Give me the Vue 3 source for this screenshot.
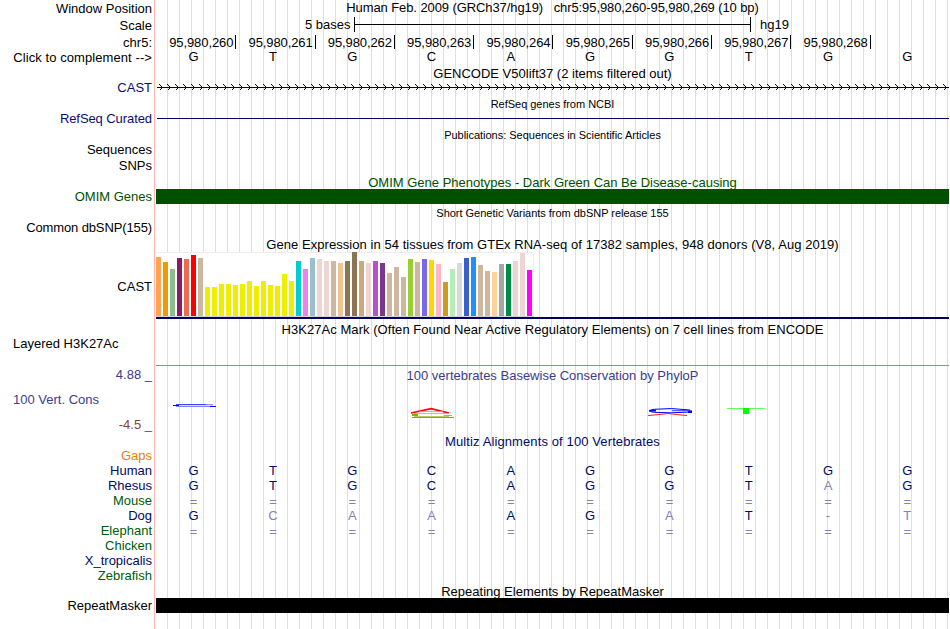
<script setup>
const coords = Array.from({ length: 9 }, (_, i) => `95,980,26${i}`)
const bases = "GTGCAGGTGG".split("")

// GTEx V8: [color, bar height in px]
const tissues = [
    ["#ffa54f", 59],
    ["#ee9a00", 54],
    ["#8fbc8f", 47],
    ["#8b1c62", 58],
    ["#ee6a50", 57],
    ["#ff0000", 61],
    ["#cdb79e", 58],
    ["#eeee00", 29],
    ["#eeee00", 29],
    ["#eeee00", 32],
    ["#eeee00", 32],
    ["#eeee00", 31],
    ["#eeee00", 32],
    ["#eeee00", 35],
    ["#eeee00", 30],
    ["#eeee00", 35],
    ["#eeee00", 31],
    ["#eeee00", 30],
    ["#eeee00", 42],
    ["#eeee00", 35],
    ["#00cdcd", 55],
    ["#ee82ee", 47],
    ["#9ac0cd", 58],
    ["#eed5d2", 57],
    ["#eed5d2", 55],
    ["#cdb79e", 55],
    ["#eec591", 53],
    ["#8b7355", 55],
    ["#8b7355", 64],
    ["#cdaa7d", 55],
    ["#eed5d2", 53],
    ["#b452cd", 55],
    ["#7a378b", 53],
    ["#cdb79e", 43],
    ["#cdb79e", 49],
    ["#cdb79e", 39],
    ["#9acd32", 57],
    ["#cdb79e", 54],
    ["#7a67ee", 57],
    ["#ffd700", 56],
    ["#ffb6c1", 52],
    ["#cd9b1d", 34],
    ["#b4eeb4", 47],
    ["#d9d9d9", 53],
    ["#3a5fcd", 58],
    ["#1e90ff", 59],
    ["#cdb79e", 51],
    ["#cdb79e", 45],
    ["#ffd39b", 44],
    ["#a6a6a6", 52],
    ["#008b45", 52],
    ["#eed5d2", 55],
    ["#eed5d2", 63],
    ["#ff00ff", 46],
]

// lower case = differs from human
const species = [
    { name: "Gaps", tone: "orange", seq: "" },
    { name: "Human", tone: "navy", seq: "GTGCAGGTGG" },
    { name: "Rhesus", tone: "navy", seq: "GTGCAGGTaG" },
    { name: "Mouse", tone: "leaf", seq: "==========" },
    { name: "Dog", tone: "navy", seq: "GcaaAGaT-t" },
    { name: "Elephant", tone: "leaf", seq: "==========" },
    { name: "Chicken", tone: "leaf", seq: "" },
    { name: "X_tropicalis", tone: "navy", seq: "" },
    { name: "Zebrafish", tone: "leaf", seq: "" },
]

const arrows = Array.from({ length: 99 }, (_, i) => 3.5 + i * 8)
</script>

<template>
    <div class="browser">
        <div class="row h17">
            <div class="label lower">Window Position</div>
            <div class="title window">
                Human Feb. 2009 (GRCh37/hg19) &nbsp; chr5:95,980,260-95,980,269
                (10 bp)
            </div>
        </div>
        <div class="row h17">
            <div class="label lower">Scale</div>
            <div class="scale">
                <span class="scale-size">5 bases</span>
                <span class="scale-bar"></span>
                <span>hg19</span>
            </div>
        </div>
        <div class="row h16">
            <div class="label lower">chr5:</div>
            <div class="cells coords">
                <span v-for="c in coords" :key="c">{{ c }}</span>
            </div>
        </div>
        <div class="row h15">
            <div class="label complement">Click to complement --&gt;</div>
            <div class="cells bases">
                <span v-for="(b, i) in bases" :key="i">{{ b }}</span>
            </div>
        </div>

        <div class="row h15">
            <div class="title lower">GENCODE V50lift37 (2 items filtered out)</div>
        </div>
        <div class="row h15">
            <div class="label blue">CAST</div>
            <svg class="gene" width="793" height="15" shape-rendering="crispEdges">
                <rect x="1" y="7" width="793" height="1" fill="#000064" />
                <path
                    v-for="x in arrows"
                    :key="x"
                    :d="`M${x} 4.5l3 3l-3 3`"
                    fill="none"
                    stroke="#000050"
                />
            </svg>
        </div>

        <div class="row h16">
            <div class="title small">RefSeq genes from NCBI</div>
        </div>
        <div class="row h15">
            <div class="label blue refseq">RefSeq Curated</div>
            <div class="thin-line"></div>
        </div>

        <div class="row h16">
            <div class="title small">Publications: Sequences in Scientific Articles</div>
        </div>
        <div class="row h16"><div class="label">Sequences</div></div>
        <div class="row h16"><div class="label">SNPs</div></div>

        <div class="row h15">
            <div class="title green lower">
                OMIM Gene Phenotypes - Dark Green Can Be Disease-causing
            </div>
        </div>
        <div class="row h15">
            <div class="label green">OMIM Genes</div>
            <div class="block omim-block"></div>
        </div>

        <div class="row h16">
            <div class="title small">Short Genetic Variants from dbSNP release 155</div>
        </div>
        <div class="row h16"><div class="label dbsnp">Common dbSNP(155)</div></div>

        <div class="row h16">
            <div class="title gtex lower">
                Gene Expression in 54 tissues from GTEx RNA-seq of 17382
                samples, 948 donors (V8, Aug 2019)
            </div>
        </div>
        <div class="row expression">
            <div class="label">CAST</div>
            <div class="chart-track">
                <div class="chart">
                    <i
                        v-for="([color, height], i) in tissues"
                        :key="i"
                        :style="{ background: color, height: height + 'px' }"
                    ></i>
                </div>
            </div>
        </div>

        <div class="row h16">
            <div class="title h3k">
                H3K27Ac Mark (Often Found Near Active Regulatory Elements) on 7
                cell lines from ENCODE
            </div>
        </div>
        <div class="row layered">
            <div class="label left">Layered H3K27Ac</div>
            <div class="baseline"></div>
        </div>

        <div class="row conservation">
            <div class="cons-labels">
                <span class="violet">4.88 _</span>
                <span class="violet cons-name">100 Vert. Cons</span>
                <span class="red">-4.5 _</span>
            </div>
            <div class="cons-track">
                <div class="title violet">
                    100 vertebrates Basewise Conservation by PhyloP
                </div>
                <svg width="793" height="49" fill="none">
                    <g stroke="#0000ff">
                        <path d="M20 19.5H50" stroke="#4040ff" />
                        <path d="M50 19.5H57" stroke="#9090ff" />
                        <path d="M17 20.5H23" />
                        <path d="M23 20.5H57" stroke="#dcdcff" />
                        <path d="M20 21.5H56" stroke="#8080ff" />
                        <path d="M54 21.5H60" />
                    </g>
                    <!-- fourth base -->
                    <path d="M255 28L275 23.6L293 28" stroke="#ff0000" stroke-width="1.6" />
                    <path d="M263 26.5H287" stroke="#ff8080" stroke-width="0.8" />
                    <path d="M258 28.5H293M258 31.5H293" stroke="#c5c55c" />
                    <rect x="256" y="29" width="6" height="2" fill="#a0a000" />
                    <path d="M288 30.5H296" stroke="#b8b830" />
                    <path d="M256 32.5H298" stroke="#8080f0" />
                    <!-- seventh base -->
                    <g stroke="#0000ff">
                        <path d="M534 25Q515 22.5 498 24.3Q489 26 498 27.3Q515 28.5 534 27" />
                        <path d="M516 25.7H536" stroke-width="0.8" />
                        <path d="M532 27H536" stroke-width="2" />
                        <path d="M493 25.7H500" stroke-width="1.6" />
                    </g>
                    <path d="M492 30.5Q504 29.6 512 28.5Q520 29.6 531 30.5" stroke="#ff0000" stroke-width="0.9" />
                    <path d="M571 23.5H609" stroke="#5cff5c" />
                    <rect x="587" y="23" width="6" height="6" fill="#00ff00" />
                </svg>
            </div>
        </div>

        <div class="row h14">
            <div class="title navy multiz">Multiz Alignments of 100 Vertebrates</div>
        </div>
        <div v-for="s in species" :key="s.name" class="row h15">
            <div class="label" :class="s.tone">{{ s.name }}</div>
            <div class="cells navy">
                <span
                    v-for="(c, i) in s.seq"
                    :key="i"
                    :class="{ faded: !/[A-Z]/.test(c), gap: c === '=' }"
                    >{{ c.toUpperCase() }}</span
                >
            </div>
        </div>

        <div class="row h15">
            <div class="title lower">Repeating Elements by RepeatMasker</div>
        </div>
        <div class="row h15">
            <div class="label">RepeatMasker</div>
            <div class="block"></div>
        </div>
    </div>
</template>

<style>
body {
    margin: 0;
    background: #fff;
}
</style>

<style scoped>
.browser {
    width: 950px;
    height: 629px;
    overflow: hidden;
    font-family: "Liberation Sans", Arial, sans-serif;
    font-size: 13px;
    line-height: 15px;
    color: #000;
    background:
        linear-gradient(#ffb4b4, #ffb4b4) 154px 0 / 1px 100% no-repeat,
        repeating-linear-gradient(
                90deg,
                transparent 0 11px,
                #dcdcf8 11px 12px
            )
            156px 0 / 794px 100% no-repeat,
        #fff;
}

.row {
    display: grid;
    grid-template-columns: 156px 793px;
    white-space: nowrap;
}

.h14 {
    height: 14px;
}

.h15 {
    height: 15px;
}

.h16 {
    height: 16px;
}

.h17 {
    height: 17px;
}

.label {
    padding-right: 4px;
    text-align: right;
}

.label.left {
    padding-left: 13px;
    text-align: left;
}

.title {
    grid-column: 2;
    text-align: center;
}

.lower {
    padding-top: 1px;
}

.small {
    padding-top: 2px;
    font-size: 11px;
    letter-spacing: -0.02px;
}

.window {
    letter-spacing: -0.09px;
}

.complement {
    letter-spacing: 0.08px;
}

.refseq {
    letter-spacing: -0.08px;
}

.dbsnp {
    letter-spacing: -0.12px;
}

.gtex {
    letter-spacing: 0.057px;
}

.h3k {
    padding-top: 2px;
    letter-spacing: 0.05px;
}

.multiz {
    letter-spacing: 0.11px;
}

.blue {
    color: #0c0c78;
}

.navy {
    color: #000a64;
}

.green {
    color: #005000;
}

.leaf {
    color: #005a0a;
}

.orange {
    color: #e68200;
}

.violet {
    color: #3c3c8c;
}

.red {
    color: #8c3c3c;
}

.scale {
    display: flex;
    padding-left: 149px;
}

.scale-size {
    width: 49px;
}

.scale-bar {
    width: 395px;
    height: 15px;
    margin-right: 9px;
    border: solid #000;
    border-width: 0 1px;
    background: linear-gradient(#000, #000) 0 7px / 100% 1px no-repeat;
}

.cells {
    display: grid;
    grid-template-columns: repeat(10, 79.3px);
}

.cells span {
    padding-right: 4px;
    text-align: center;
}

.bases {
    margin-top: -1px;
}

.coords {
    padding-top: 1px;
    letter-spacing: -0.1px;
}

.coords span {
    height: 14px;
    margin-right: -1px;
    padding-right: 2px;
    border-right: 1px solid #000;
    text-align: right;
}

.gene {
    display: block;
}

.thin-line {
    height: 1px;
    margin: 7px 0 0 1px;
    background: #000064;
}

.block {
    height: 15px;
    background: #000;
}

.omim-block {
    background: #005000;
}

.expression {
    height: 68px;
    align-items: center;
}

.chart-track {
    height: 67px;
    border-bottom: 2px solid #000064;
    box-sizing: border-box;
    align-self: start;
}

.chart {
    display: flex;
    align-items: flex-end;
    gap: 2px;
    width: 378px;
    height: 65px;
    box-sizing: border-box;
    background: #fff;
    border-bottom: 1px solid #d3d3d3;
    box-shadow: inset -1px 1px #eee;
}

.chart i {
    width: 5px;
}

.layered {
    height: 30px;
}

.baseline {
    border-bottom: 1px solid #7ba07b;
}

.conservation {
    height: 68px;
}

.cons-labels {
    display: flex;
    flex-direction: column;
    align-items: flex-end;
    gap: 10px;
    padding: 1px 4px 0 13px;
}

.cons-name {
    align-self: flex-start;
}

.cons-track svg {
    display: block;
}

.cons-track .title {
    height: 17px;
    padding-top: 2px;
}

.faded {
    color: #8282b4;
}

.gap {
    padding-top: 1px;
}
</style>
